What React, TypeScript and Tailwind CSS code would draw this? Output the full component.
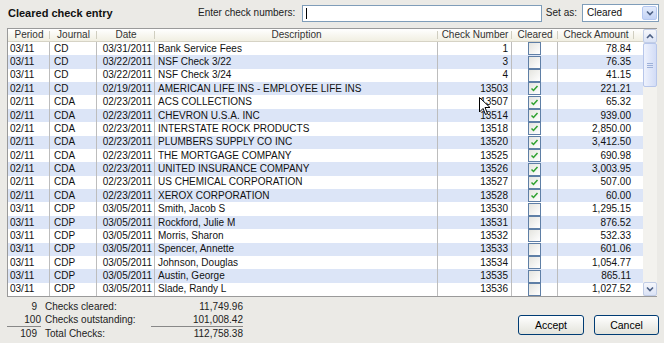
import React from "react";

type Row = {
  period: string;
  journal: string;
  date: string;
  desc: string;
  num: string;
  cleared: boolean;
  amount: string;
};

const rows: Row[] = [
  { period: "03/11", journal: "CD", date: "03/31/2011", desc: "Bank Service Fees", num: "1", cleared: false, amount: "78.84" },
  { period: "03/11", journal: "CD", date: "03/22/2011", desc: "NSF Check 3/22", num: "3", cleared: false, amount: "76.35" },
  { period: "03/11", journal: "CD", date: "03/22/2011", desc: "NSF Check 3/24", num: "4", cleared: false, amount: "41.15" },
  { period: "02/11", journal: "CD", date: "02/19/2011", desc: "AMERICAN LIFE INS - EMPLOYEE LIFE INS", num: "13503", cleared: true, amount: "221.21" },
  { period: "02/11", journal: "CDA", date: "02/23/2011", desc: "ACS COLLECTIONS", num: "13507", cleared: true, amount: "65.32" },
  { period: "02/11", journal: "CDA", date: "02/23/2011", desc: "CHEVRON U.S.A. INC", num: "13514", cleared: true, amount: "939.00" },
  { period: "02/11", journal: "CDA", date: "02/23/2011", desc: "INTERSTATE ROCK PRODUCTS", num: "13518", cleared: true, amount: "2,850.00" },
  { period: "02/11", journal: "CDA", date: "02/23/2011", desc: "PLUMBERS SUPPLY CO INC", num: "13520", cleared: true, amount: "3,412.50" },
  { period: "02/11", journal: "CDA", date: "02/23/2011", desc: "THE MORTGAGE COMPANY", num: "13525", cleared: true, amount: "690.98" },
  { period: "02/11", journal: "CDA", date: "02/23/2011", desc: "UNITED INSURANCE COMPANY", num: "13526", cleared: true, amount: "3,003.95" },
  { period: "02/11", journal: "CDA", date: "02/23/2011", desc: "US CHEMICAL CORPORATION", num: "13527", cleared: true, amount: "507.00" },
  { period: "02/11", journal: "CDA", date: "02/23/2011", desc: "XEROX CORPORATION", num: "13528", cleared: true, amount: "60.00" },
  { period: "03/11", journal: "CDP", date: "03/05/2011", desc: "Smith, Jacob S", num: "13530", cleared: false, amount: "1,295.15" },
  { period: "03/11", journal: "CDP", date: "03/05/2011", desc: "Rockford, Julie M", num: "13531", cleared: false, amount: "876.52" },
  { period: "03/11", journal: "CDP", date: "03/05/2011", desc: "Morris, Sharon", num: "13532", cleared: false, amount: "532.33" },
  { period: "03/11", journal: "CDP", date: "03/05/2011", desc: "Spencer, Annette", num: "13533", cleared: false, amount: "601.06" },
  { period: "03/11", journal: "CDP", date: "03/05/2011", desc: "Johnson, Douglas", num: "13534", cleared: false, amount: "1,054.77" },
  { period: "03/11", journal: "CDP", date: "03/05/2011", desc: "Austin, George", num: "13535", cleared: false, amount: "865.11" },
  { period: "03/11", journal: "CDP", date: "03/05/2011", desc: "Slade, Randy L", num: "13536", cleared: false, amount: "1,027.52" },
];

const cols = "grid grid-cols-[42px_47px_58px_283px_74px_46px_76px_9px]";

function CheckBox({ checked }: { checked: boolean }) {
  return (
    <div className="w-[13px] h-[13px] border border-[#5f7fa6] bg-gradient-to-br from-[#e4e4df] to-white flex items-center justify-center">
      {checked ? (
        <svg width="9" height="9" viewBox="0 0 9 9">
          <path d="M1.5 4.5 L3.5 6.5 L7.5 2" stroke="#2fa12f" strokeWidth="1.5" fill="none" />
        </svg>
      ) : null}
    </div>
  );
}

function HeaderCell({ label, last }: { label: string; last?: boolean }) {
  return (
    <div className="relative flex items-center justify-center h-full text-[#333]">
      {label}
      {!last ? <div className="absolute right-0 top-[2px] bottom-[2px] w-px bg-[#d0cec0]" /> : null}
    </div>
  );
}

function Chevron({ up }: { up?: boolean }) {
  return (
    <svg width="8" height="6" viewBox="0 0 8 6">
      <path d={up ? "M1 5 L4 2 L7 5" : "M1 1.5 L4 4.5 L7 1.5"} stroke="#4d6185" strokeWidth="1.6" fill="none" />
    </svg>
  );
}

export default function App() {
  return (
    <div className="w-[664px] h-[343px] bg-[#ebeae6] text-[#111] text-[10px] leading-none relative overflow-hidden" style={{ fontFamily: '"Liberation Sans", Arial, sans-serif' }}>
      {/* top bar */}
      <div className="flex items-center h-[26px] pl-[8px] pr-[5px]">
        <div className="font-bold text-[11px] w-[190px]">Cleared check entry</div>
        <div className="text-[#222] mr-[7px]">Enter check numbers:</div>
        <div className="w-[240px] h-[17px] bg-white border border-[#7f9db9] flex items-center pl-[3px]">
          <div className="w-px h-[11px] bg-black" />
        </div>
        <div className="ml-auto text-[#222] mr-[5px]">Set as:</div>
        <div className="w-[77px] h-[18px] bg-white border border-[#7f9db9] flex items-center">
          <div className="flex-1 pl-[4px]">Cleared</div>
          <div className="w-[15px] h-[14px] mr-px bg-gradient-to-b from-[#e3ebfb] to-[#c3d3f5] border border-[#b5c8f0] rounded-[2px] flex items-center justify-center">
            <Chevron />
          </div>
        </div>
      </div>

      {/* table */}
      <div className="mx-[7px] mt-[2px] h-[269px] border border-[#9a9a9a] bg-white flex">
        <div className="flex-1 flex flex-col">
          <div className={`${cols} h-[13px] bg-gradient-to-b from-white to-[#f1efe2] border-b border-[#d6d3c5]`}>
            <HeaderCell label="Period" />
            <HeaderCell label="Journal" />
            <HeaderCell label="Date" />
            <HeaderCell label="Description" />
            <HeaderCell label="Check Number" />
            <HeaderCell label="Cleared" />
            <HeaderCell label="Check Amount" />
            <div />
          </div>
          {rows.map((r, i) => (
            <div key={i} className={`${cols} h-[13.4px] items-center ${i % 2 === 1 ? "bg-[#dce5f7]" : "bg-white"}`}>
              <div className="pl-[2px] h-full flex items-center border-r border-[#bdbdbd]">{r.period}</div>
              <div className="pl-[4px] h-full flex items-center border-r border-[#bdbdbd]">{r.journal}</div>
              <div className="pr-[2px] h-full flex items-center justify-end border-r border-[#bdbdbd]">{r.date}</div>
              <div className="pl-[3px] h-full flex items-center border-r border-[#bdbdbd] whitespace-nowrap overflow-hidden">{r.desc}</div>
              <div className="pr-[3px] h-full flex items-center justify-end border-r border-[#bdbdbd]">{r.num}</div>
              <div className="h-full flex items-center justify-center border-r border-[#bdbdbd]">
                <CheckBox checked={r.cleared} />
              </div>
              <div className="pr-[3px] h-full flex items-center justify-end">{r.amount}</div>
              <div />
            </div>
          ))}
        </div>
        {/* scrollbar */}
        <div className="w-[15px] bg-[#f3f2ee] flex flex-col items-center">
          <div className="w-[14px] h-[14px] bg-gradient-to-b from-[#f6f7fb] to-[#dbe3f6] border border-[#c1cde6] rounded-[2px] flex items-center justify-center">
            <Chevron up />
          </div>
          <div className="w-[14px] h-[44px] bg-gradient-to-r from-[#eef2fd] to-[#d2dcf6] border border-[#b7c6ea] rounded-[2px] flex flex-col items-center justify-center gap-[1px]">
            <div className="w-[6px] h-px bg-[#9eb1d8]" />
            <div className="w-[6px] h-px bg-[#9eb1d8]" />
            <div className="w-[6px] h-px bg-[#9eb1d8]" />
          </div>
          <div className="flex-1" />
          <div className="w-[14px] h-[14px] bg-gradient-to-b from-[#f6f7fb] to-[#dbe3f6] border border-[#c1cde6] rounded-[2px] flex items-center justify-center">
            <Chevron />
          </div>
        </div>
      </div>

      {/* footer */}
      <div className="flex items-start pl-[7px] pr-[5px] pt-[3px]">
        <div className="w-[236px] flex flex-col text-[#222]">
          <div className="flex h-[13.5px] items-center">
            <div className="w-[30px] text-right">9</div>
            <div className="ml-[8px] flex-1">Checks cleared:</div>
            <div className="text-right">11,749.96</div>
          </div>
          <div className="flex h-[13.5px] items-center">
            <div className="w-[34px] text-right border-b border-[#888] h-full flex items-center justify-end pl-[4px]">100</div>
            <div className="ml-[4px] flex-1">Checks outstanding:</div>
            <div className="w-[92px] text-right border-b border-[#888] h-full flex items-center justify-end">101,008.42</div>
          </div>
          <div className="flex h-[13.5px] items-center">
            <div className="w-[30px] text-right">109</div>
            <div className="ml-[8px] flex-1">Total Checks:</div>
            <div className="text-right">112,758.38</div>
          </div>
        </div>
        <div className="ml-auto mt-[15px] flex gap-[10px]">
          <button className="w-[66px] h-[20px] rounded-[3px] border border-[#003c74] bg-gradient-to-b from-white to-[#e3e3db] text-[10.5px] text-black">Accept</button>
          <button className="w-[65px] h-[20px] rounded-[3px] border border-[#003c74] bg-gradient-to-b from-white to-[#e3e3db] text-[10.5px] text-black">Cancel</button>
        </div>
      </div>

      {/* mouse pointer */}
      <svg className="absolute left-[479px] top-[97px]" width="12" height="19" viewBox="0 0 12 19">
        <path d="M0.5 0.5 L0.5 15 L4 11.5 L6.5 17.5 L8.5 16.5 L6 10.5 L11 10.5 Z" fill="white" stroke="black" strokeWidth="1" />
      </svg>
    </div>
  );
}
